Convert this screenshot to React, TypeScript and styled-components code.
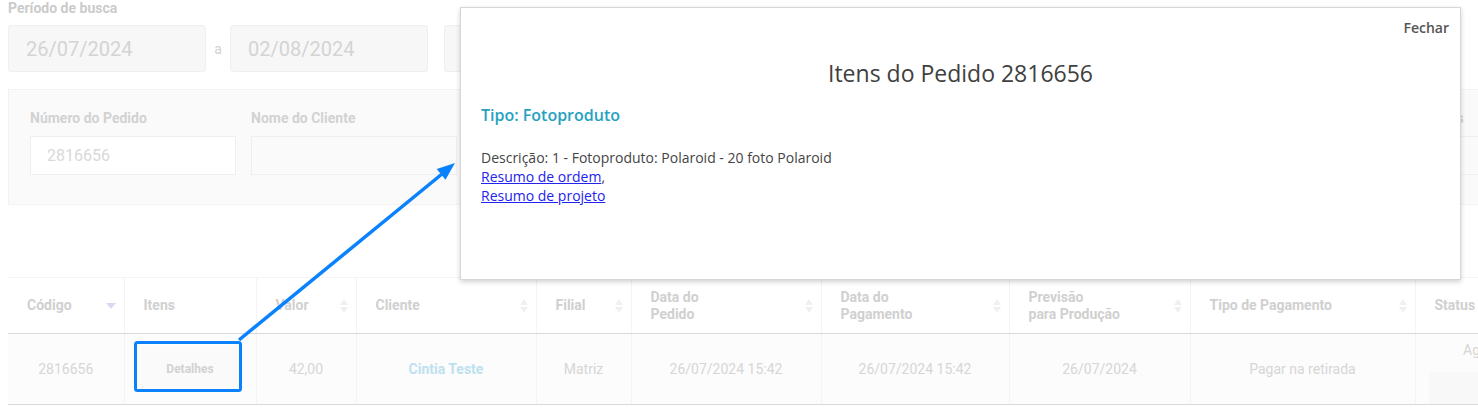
import React from "react";
import styled, { createGlobalStyle } from "styled-components";

const GlobalStyle = createGlobalStyle`
  body {
    margin: 0;
    background: #fff;
    overflow: hidden;
    font-family: Roboto, "Liberation Sans", sans-serif;
  }
`;

const columns = [
  { label: "Código", width: 116, sort: "desc" },
  { label: "Itens", width: 132 },
  { label: "Valor", width: 100, sort: "both" },
  { label: "Cliente", width: 180, sort: "both" },
  { label: "Filial", width: 95, sort: "both" },
  { label: "Data do\nPedido", width: 190, sort: "both" },
  { label: "Data do\nPagamento", width: 188, sort: "both" },
  { label: "Previsão\npara Produção", width: 181, sort: "both" },
  { label: "Tipo de Pagamento", width: 225, sort: "both" },
  { label: "Status", width: 246 },
];

const filters = [
  { label: "Número do Pedido", value: "2816656", white: true },
  { label: "Nome do Cliente", value: "" },
  { label: "E-mail do Cliente", value: "" },
  { label: "Filial", value: "" },
  { label: "Forma de Pagamento", value: "" },
  { label: "Status do Pedido", value: "" },
  { label: "Tipo de Produtos", value: "" },
];

const SortIcon = ({ mode }: { mode?: string }) => {
  if (!mode) return <span style={{ width: 8 }} />;
  if (mode === "desc")
    return (
      <svg width="10" height="8" viewBox="0 0 10 8">
        <path d="M0 1h10L5 7z" fill="#d9d9f2" />
      </svg>
    );
  return (
    <svg width="8" height="16" viewBox="0 0 8 16">
      <path d="M4 1l4 6H0z" fill="#f0f0f0" />
      <path d="M4 15l4-6H0z" fill="#f0f0f0" />
    </svg>
  );
};

const App = () => {
  return (
    <>
      <GlobalStyle />
      <Page>
        <SearchLabel>Período de busca</SearchLabel>
        <DateRow>
          <DateBox>26/07/2024</DateBox>
          <Separator>a</Separator>
          <DateBox>02/08/2024</DateBox>
          <SearchButton>Buscar</SearchButton>
        </DateRow>

        <FilterPanel>
          {filters.map((f) => (
            <Field key={f.label}>
              <FieldLabel>{f.label}</FieldLabel>
              <FieldInput $white={f.white}>{f.value}</FieldInput>
            </Field>
          ))}
        </FilterPanel>

        <Table>
          <colgroup>
            {columns.map((c) => (
              <col key={c.label} style={{ width: c.width }} />
            ))}
          </colgroup>
          <thead>
            <tr>
              {columns.map((c) => (
                <HeadCell key={c.label}>
                  <HeadInner>
                    <span>{c.label}</span>
                    <SortIcon mode={c.sort} />
                  </HeadInner>
                </HeadCell>
              ))}
            </tr>
          </thead>
          <tbody>
            <tr>
              <Cell>2816656</Cell>
              <Cell>
                <DetailsButton>Detalhes</DetailsButton>
              </Cell>
              <Cell>42,00</Cell>
              <Cell>
                <ClientLink>Cintia Teste</ClientLink>
              </Cell>
              <Cell>Matriz</Cell>
              <Cell>26/07/2024 15:42</Cell>
              <Cell>26/07/2024 15:42</Cell>
              <Cell>26/07/2024</Cell>
              <Cell>Pagar na retirada</Cell>
              <StatusCell>
                <div>Aguardando pagamento</div>
                <StatusBox />
              </StatusCell>
            </tr>
          </tbody>
        </Table>
      </Page>

      <Modal>
        <CloseLink>Fechar</CloseLink>
        <ModalTitle>Itens do Pedido 2816656</ModalTitle>
        <ItemType>Tipo: Fotoproduto</ItemType>
        <ItemText>
          Descrição: 1 - Fotoproduto: Polaroid - 20 foto Polaroid
          <br />
          <a href="#">Resumo de ordem</a>,
          <br />
          <a href="#">Resumo de projeto</a>
        </ItemText>
      </Modal>

      <Annotation width="1478" height="409" viewBox="0 0 1478 409">
        <rect x="135.5" y="342.5" width="105" height="48" rx="2" fill="none" stroke="#0b82fd" strokeWidth="3" />
        <line x1="239" y1="340" x2="442" y2="174" stroke="#0b82fd" strokeWidth="3.5" />
        <path d="M455 163 L445.5 179.8 L436.7 169 Z" fill="#0b82fd" />
      </Annotation>
    </>
  );
};

const Page = styled.div`
  padding: 0 8px;
  width: 1660px;
`;

const SearchLabel = styled.div`
  font-size: 14px;
  font-weight: 700;
  line-height: 16px;
  color: #cbcbcb;
`;

const DateRow = styled.div`
  display: flex;
  align-items: center;
  margin-top: 9px;
`;

const DateBox = styled.div`
  box-sizing: border-box;
  width: 198px;
  height: 47px;
  display: flex;
  align-items: center;
  padding-left: 17px;
  background: #f7f7f7;
  border: 1px solid #efefef;
  border-radius: 3px;
  font-size: 20px;
  color: #d4d4d4;
`;

const Separator = styled.span`
  width: 24px;
  text-align: center;
  font-size: 14px;
  color: #d2d2d2;
`;

const SearchButton = styled(DateBox)`
  width: 200px;
  margin-left: 16px;
  font-size: 14px;
`;

const FilterPanel = styled.div`
  box-sizing: border-box;
  margin-top: 17px;
  height: 116px;
  padding: 20px 21px;
  display: flex;
  gap: 15px;
  background: #fafafa;
  border: 1px solid #f2f2f2;
`;

const Field = styled.div`
  width: 206px;
  display: flex;
  flex-direction: column;
  gap: 10px;
`;

const FieldLabel = styled.div`
  font-size: 14px;
  font-weight: 700;
  line-height: 16px;
  color: #d2d2d2;
  text-align: left;
  white-space: nowrap;
`;

const FieldInput = styled.div<{ $white?: boolean }>`
  box-sizing: border-box;
  height: 39px;
  display: flex;
  align-items: center;
  padding-left: 16px;
  background: ${(p) => (p.$white ? "#fff" : "#fafafa")};
  border: 1px solid #efefef;
  font-size: 16px;
  color: #d9d9d9;
`;

const Table = styled.table`
  margin-top: 72px;
  border-collapse: collapse;
  table-layout: fixed;
  width: 1653px;
`;

const HeadCell = styled.th`
  height: 55px;
  padding: 0;
  border-top: 1px solid #f4f4f4;
  border-bottom: 1px solid #d9d9d9;
  border-left: 1px solid #f4f4f4;
  &:first-child {
    border-left: none;
  }
  font-size: 14px;
  font-weight: 700;
  line-height: 17px;
  color: #d0d0d0;
  text-align: left;
  white-space: pre-line;
`;

const HeadInner = styled.div`
  display: flex;
  align-items: center;
  justify-content: space-between;
  padding: 0 8px 0 19px;
`;

const Cell = styled.td`
  height: 70px;
  padding: 0;
  background: #fcfcfc;
  border-bottom: 1px solid #d9d9d9;
  border-left: 1px solid #f4f4f4;
  &:first-child {
    border-left: none;
  }
  text-align: center;
  font-size: 14px;
  color: #d6d6d6;
`;

const StatusCell = styled(Cell)`
  vertical-align: top;
  padding: 8px 13px 0;
  box-sizing: border-box;
`;

const StatusBox = styled.div`
  margin-top: 14px;
  height: 32px;
  background: #f8f8f8;
`;

const DetailsButton = styled.div`
  margin: 0 auto;
  width: 100px;
  height: 46px;
  display: flex;
  align-items: center;
  justify-content: center;
  background: #fafafa;
  font-size: 12px;
  font-weight: 700;
  color: #d2d2d2;
`;

const ClientLink = styled.span`
  font-weight: 700;
  color: #bde1ee;
`;

const Modal = styled.div`
  position: absolute;
  left: 460px;
  top: 7px;
  box-sizing: border-box;
  width: 1001px;
  height: 273px;
  padding: 10px 10px 20px 20px;
  display: flex;
  flex-direction: column;
  background: #fff;
  border: 1px solid #d6d6d6;
  box-shadow: 0 2px 5px rgba(0, 0, 0, 0.18);
  font-family: "Open Sans", "Liberation Sans", sans-serif;
`;

const CloseLink = styled.div`
  align-self: flex-end;
  margin-right: 1px;
  font-size: 14px;
  font-weight: 600;
  line-height: 19px;
  color: #555;
`;

const ModalTitle = styled.h2`
  margin: 21px 0 0;
  padding-right: 10px;
  text-align: center;
  font-size: 23px;
  font-weight: 400;
  line-height: 30px;
  color: #404040;
`;

const ItemType = styled.div`
  margin-top: 16px;
  font-size: 16px;
  font-weight: 600;
  line-height: 22px;
  color: #26a2bf;
`;

const ItemText = styled.div`
  margin-top: 22px;
  font-size: 14px;
  line-height: 19px;
  color: #444;

  a {
    color: #2323ee;
    text-decoration: underline;
  }
`;

const Annotation = styled.svg`
  position: absolute;
  left: 0;
  top: 0;
  pointer-events: none;
`;

export default App;
